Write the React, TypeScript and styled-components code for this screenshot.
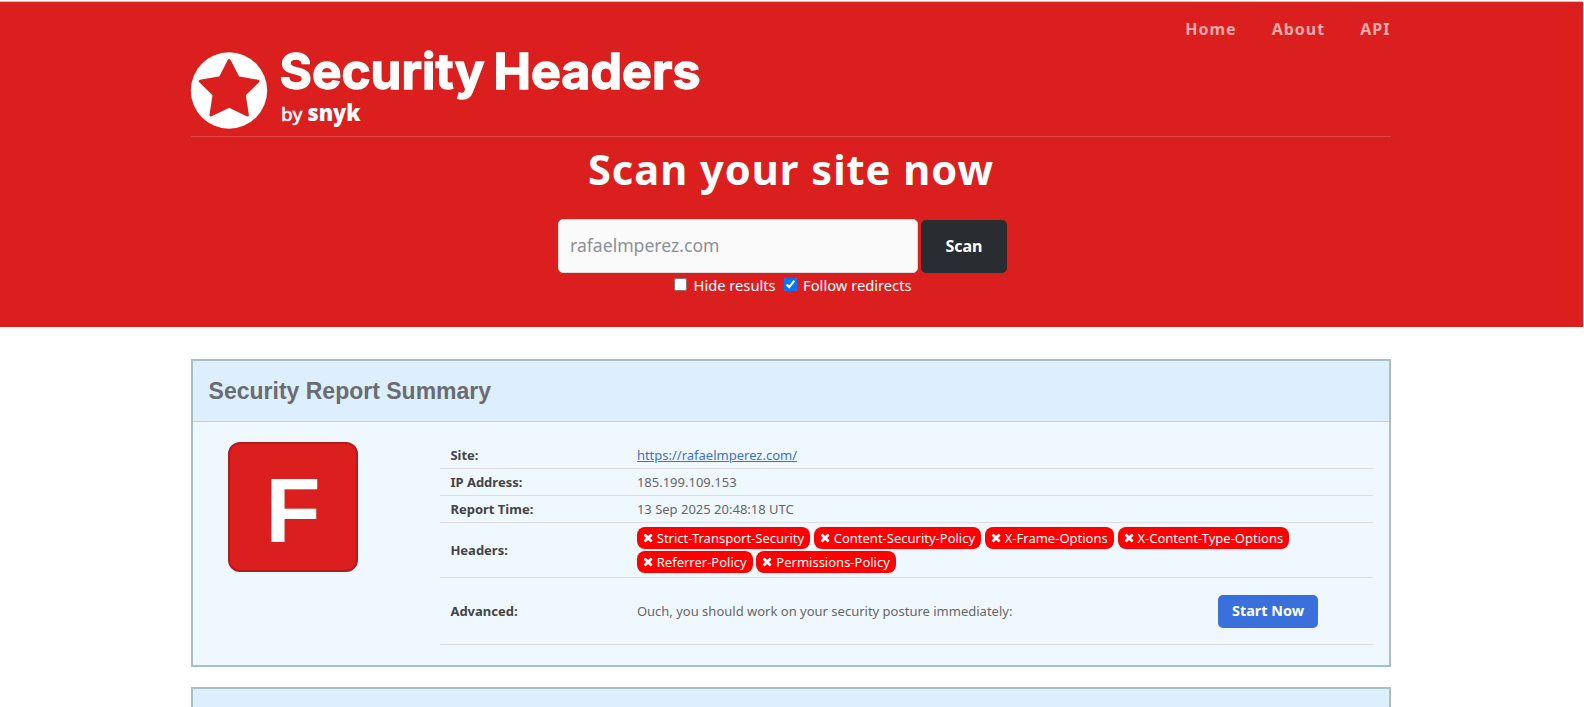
import React from 'react';
import styled, { createGlobalStyle } from 'styled-components';

const GlobalStyle = createGlobalStyle`
  * { box-sizing: border-box; }
  body {
    margin: 0;
    height: 707px;
    overflow: hidden;
    background: #fff;
    color: #666;
    font-family: 'Noto Sans', sans-serif;
    font-size: 13px;
  }
`;

const Page = styled.div`
  height: 707px;
  overflow: hidden;
  padding: 1px 1px 0 0;
`;

const Hero = styled.header`
  height: 326px;
  border-top: 1px solid #c9c9c9;
  background: #db1f1f;
  color: #fff;
`;

const Container = styled.div`
  width: 1200px;
  margin-left: 191px;
`;

const TopBar = styled.div`
  display: flex;
  justify-content: space-between;
  height: 135px;
  border-bottom: 1px solid #e24545;
`;

const Logo = styled.svg`
  display: block;
  margin-top: 44px;
  overflow: visible;
`;

const Nav = styled.nav`
  display: flex;
  gap: 35px;
  padding: 16px 0.6px 0 0;
`;

const NavLink = styled.a`
  height: 22px;
  color: #f5a9a9;
  font-size: 16px;
  font-weight: 700;
  line-height: 22px;
  letter-spacing: 1px;
`;

const ScanHeading = styled.h1`
  margin: 3px 0 0;
  font-size: 41.6px;
  font-weight: 700;
  line-height: 58px;
  letter-spacing: 1px;
  text-align: center;
`;

const ScanForm = styled.div`
  display: flex;
  align-items: flex-end;
  gap: 3px;
  margin: 21px 0 0 367px;
`;

const SiteInput = styled.input`
  width: 360px;
  height: 54px;
  padding: 0 11px 2px;
  border: 1px solid #ddd;
  border-radius: 5px;
  background: #fafafa;
  font-family: inherit;
  font-size: 17.6px;
  &::placeholder { color: #8b9199; opacity: 1; }
`;

const ScanButton = styled.button`
  width: 86px;
  height: 53px;
  padding: 0 0 2px;
  border: 0;
  border-radius: 5px;
  background: #292c31;
  color: #fff;
  font-family: inherit;
  font-size: 16px;
  font-weight: 700;
`;

const Options = styled.div`
  display: flex;
  gap: 8px;
  margin: 1px 0 0 483px;
`;

const Option = styled.label`
  display: flex;
  gap: 6.5px;
  font-size: 14.7px;
  line-height: 22px;
`;

const Check = styled.input`
  width: 13px;
  height: 13px;
  margin: 4px 0 0;
`;

const Card = styled.section<{ $tall?: boolean }>`
  height: ${(p) => (p.$tall ? '308px' : '200px')};
  margin-top: ${(p) => (p.$tall ? '32px' : '20px')};
  border: 2px solid #a9c0c2;
  background: #f0f8ff;
`;

const CardHeader = styled.div`
  height: 61px;
  padding: 0 15.6px;
  border-bottom: 1px solid #bcd2dc;
  background: #ddeeff;
`;

const CardTitle = styled.h2`
  margin: 0;
  color: #6a6c70;
  font-family: 'Liberation Sans', sans-serif;
  font-size: 23px;
  font-weight: 700;
  line-height: 60px;
`;

const CardBody = styled.div`
  display: flex;
  gap: 82px;
  padding: 20px 16px 0 35px;
`;

const Grade = styled.div`
  width: 130px;
  height: 130px;
  border: 2px solid #b21c1c;
  border-radius: 12px;
  background: #db1f1f;
  color: #fff;
  font-family: 'Liberation Sans', sans-serif;
  font-size: 90px;
  font-weight: 700;
  line-height: 134px;
  text-align: center;
`;

const Report = styled.div`
  flex: 1;
`;

const Row = styled.div<{ $h: number }>`
  display: flex;
  align-items: center;
  height: ${(p) => p.$h}px;
  padding: 0 0 0 10.4px;
  border-bottom: 1px solid #ddd;
`;

const Label = styled.div`
  width: 186.5px;
  color: #444;
  font-weight: 700;
`;

const Value = styled.div`
  flex: 1;
`;

const SiteLink = styled.a`
  color: #3a70db;
  text-decoration: underline;
`;

const Pills = styled.div`
  display: flex;
  flex-wrap: wrap;
  flex: 1;
  gap: 2px 3.8px;
  padding-right: 60px;
`;

const Pill = styled.span`
  display: flex;
  align-items: center;
  height: 22px;
  padding: 0 6px;
  border-radius: 8px;
  background: #f00;
  color: #fff;
`;

const CrossIcon = styled.svg`
  width: 10.2px;
  height: 12px;
  margin-right: 3.7px;
`;

const StartButton = styled.button`
  width: 100px;
  height: 33px;
  margin-right: 55px;
  padding: 0 0 1px;
  border: 0;
  border-radius: 5px;
  background: #3a70db;
  color: #fff;
  font-family: inherit;
  font-size: 14.4px;
  font-weight: 700;
`;

const Cross = () => (
  <CrossIcon viewBox="0 0 1408 1664" fill="#fff">
    <path
      transform="translate(0 1408) scale(1 -1)"
      d="M1298 214q0 -40 -28 -68l-136 -136q-28 -28 -68 -28t-68 28l-294 294l-294 -294q-28 -28 -68 -28t-68 28l-136 136q-28 28 -28 68t28 68l294 294l-294 294q-28 28 -28 68t28 68l136 136q28 28 68 28t68 -28l294 -294l294 294q28 28 68 28t68 -28l136 -136q28 -28 28 -68t-28 -68l-294 -294l294 -294q28 -28 28 -68z"
    />
  </CrossIcon>
);

const SiteLogo = () => (
  <Logo width="520" height="84" viewBox="0 0 520 84" fill="#fff">
    <circle cx="38" cy="44.5" r="38.2" />
    <path
      d="M38.2 14.5L47 31.7L67 35.3L53.2 48.8L56.4 69L38.2 60.2L20 69L23.1 48.8L9.3 35.3L29.4 31.7Z"
      fill="#db1f1f"
      stroke="#db1f1f"
      strokeWidth="3"
      strokeLinejoin="round"
    />
    <g fontFamily="Inter, sans-serif" fontWeight="700" fontSize="49" stroke="#fff" strokeWidth="1.3">
      <text x="88.5" y="42.5" textLength="205" lengthAdjust="spacingAndGlyphs">Security</text>
      <text x="302.5" y="42.5" textLength="207" lengthAdjust="spacingAndGlyphs">Headers</text>
    </g>
    <text x="90" y="74.5" fontFamily="'Noto Sans', sans-serif" fontSize="17.5" fontWeight="500" stroke="#fff" strokeWidth="0.3" textLength="21.5" lengthAdjust="spacingAndGlyphs">by</text>
    <text x="116.5" y="75" fontFamily="'Open Sans', sans-serif" fontSize="22.5" fontWeight="800" textLength="53" lengthAdjust="spacingAndGlyphs">snyk</text>
  </Logo>
);

const headers = [
  'Strict-Transport-Security',
  'Content-Security-Policy',
  'X-Frame-Options',
  'X-Content-Type-Options',
  'Referrer-Policy',
  'Permissions-Policy',
];

export default function App() {
  return (
    <Page>
      <GlobalStyle />
      <Hero>
        <Container>
          <TopBar>
            <SiteLogo />
            <Nav>
              <NavLink>Home</NavLink>
              <NavLink>About</NavLink>
              <NavLink>API</NavLink>
            </Nav>
          </TopBar>
          <ScanHeading>Scan your site now</ScanHeading>
          <ScanForm>
            <SiteInput placeholder="rafaelmperez.com" />
            <ScanButton>Scan</ScanButton>
          </ScanForm>
          <Options>
            <Option><Check type="checkbox" />Hide results</Option>
            <Option><Check type="checkbox" defaultChecked />Follow redirects</Option>
          </Options>
        </Container>
      </Hero>
      <Container>
        <Card $tall>
          <CardHeader><CardTitle>Security Report Summary</CardTitle></CardHeader>
          <CardBody>
            <Grade>F</Grade>
            <Report>
              <Row $h={27}><Label>Site:</Label><Value><SiteLink>https://rafaelmperez.com/</SiteLink></Value></Row>
              <Row $h={27}><Label>IP Address:</Label><Value>185.199.109.153</Value></Row>
              <Row $h={27}><Label>Report Time:</Label><Value>13 Sep 2025 20:48:18 UTC</Value></Row>
              <Row $h={55}>
                <Label>Headers:</Label>
                <Pills>{headers.map((h) => <Pill key={h}><Cross />{h}</Pill>)}</Pills>
              </Row>
              <Row $h={67}>
                <Label>Advanced:</Label>
                <Value>Ouch, you should work on your security posture immediately:</Value>
                <StartButton>Start Now</StartButton>
              </Row>
            </Report>
          </CardBody>
        </Card>
        <Card><CardHeader /></Card>
      </Container>
    </Page>
  );
}
